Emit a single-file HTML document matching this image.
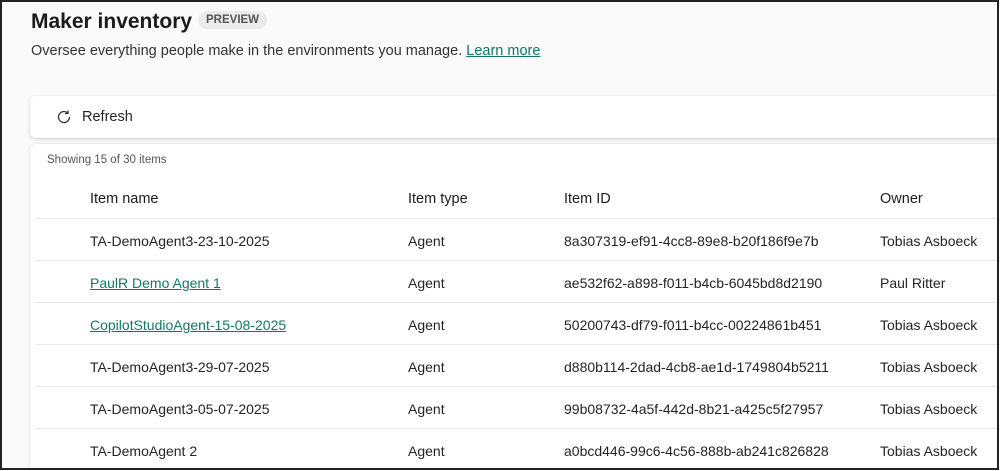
<!DOCTYPE html>
<html><head><style>
*{margin:0;padding:0;box-sizing:border-box}
body{width:1000px;height:471px;overflow:hidden;background:#fff;font-family:"Liberation Sans","DejaVu Sans",sans-serif;color:#242424}
.frame{position:absolute;left:0;top:0;width:999px;height:470px;border:2px solid #222;background:#fafafa;overflow:hidden}
.title{position:absolute;left:29px;top:8px;font-size:21px;font-weight:bold;color:#1b1b1b}
.badge{position:absolute;left:196px;top:9px;background:#ebebeb;border-radius:9px;padding:3px 8px;font-size:11.5px;font-weight:bold;color:#555}
.sub{position:absolute;left:29px;top:41px;font-size:14.5px;color:#333}
.sub a{color:#117865;text-decoration:underline}
.bar{position:absolute;left:28px;top:94px;width:990px;height:42px;background:#fff;border-radius:5px;box-shadow:0 1px 3px rgba(0,0,0,.18)}
.bar svg{position:absolute;left:26px;top:13px}
.bar span{position:absolute;left:52px;top:13px;font-size:14.5px;color:#242424}
.card{position:absolute;left:28px;top:142px;width:990px;height:340px;background:#fff;border-radius:5px;box-shadow:0 0 3px rgba(0,0,0,.15)}
.show{position:absolute;left:17px;top:10px;font-size:11.5px;color:#555}
.row{position:absolute;left:6px;width:990px;height:42px;border-bottom:1px solid #e8e8e8;font-size:14px}
.row div{position:absolute;top:14px;white-space:nowrap}
.c1{left:54px}.c2{left:372px}.c3{left:528px}.c4{left:844px}
.hd{font-size:14.5px;color:#1b1b1b}
.lnk{color:#117865;text-decoration:underline}
</style></head><body>
<div class="frame">
<div class="title">Maker inventory</div>
<div class="badge">PREVIEW</div>
<div class="sub">Oversee everything people make in the environments you manage. <a>Learn more</a></div>
<div class="bar"><svg width="16" height="16" viewBox="0 0 16 16"><path d="M13.5 8A5.5 5.5 0 1 1 11.5 3.8" fill="none" stroke="#333" stroke-width="1.3"/><path d="M12 1.5v3h-3" fill="none" stroke="#333" stroke-width="1.3"/></svg><span>Refresh</span></div>
<div class="card">
<div class="show">Showing 15 of 30 items</div>
<div class="row hd" style="top:33px"><div class="c1">Item name</div><div class="c2">Item type</div><div class="c3">Item ID</div><div class="c4">Owner</div></div>
<div class="row" style="top:75px"><div class="c1">TA-DemoAgent3-23-10-2025</div><div class="c2">Agent</div><div class="c3">8a307319-ef91-4cc8-89e8-b20f186f9e7b</div><div class="c4">Tobias Asboeck</div></div>
<div class="row" style="top:117px"><div class="c1 lnk">PaulR Demo Agent 1</div><div class="c2">Agent</div><div class="c3">ae532f62-a898-f011-b4cb-6045bd8d2190</div><div class="c4">Paul Ritter</div></div>
<div class="row" style="top:159px"><div class="c1 lnk">CopilotStudioAgent-15-08-2025</div><div class="c2">Agent</div><div class="c3">50200743-df79-f011-b4cc-00224861b451</div><div class="c4">Tobias Asboeck</div></div>
<div class="row" style="top:201px"><div class="c1">TA-DemoAgent3-29-07-2025</div><div class="c2">Agent</div><div class="c3">d880b114-2dad-4cb8-ae1d-1749804b5211</div><div class="c4">Tobias Asboeck</div></div>
<div class="row" style="top:243px"><div class="c1">TA-DemoAgent3-05-07-2025</div><div class="c2">Agent</div><div class="c3">99b08732-4a5f-442d-8b21-a425c5f27957</div><div class="c4">Tobias Asboeck</div></div>
<div class="row" style="top:285px"><div class="c1">TA-DemoAgent 2</div><div class="c2">Agent</div><div class="c3">a0bcd446-99c6-4c56-888b-ab241c826828</div><div class="c4">Tobias Asboeck</div></div>
</div>
</div>
</body></html>
